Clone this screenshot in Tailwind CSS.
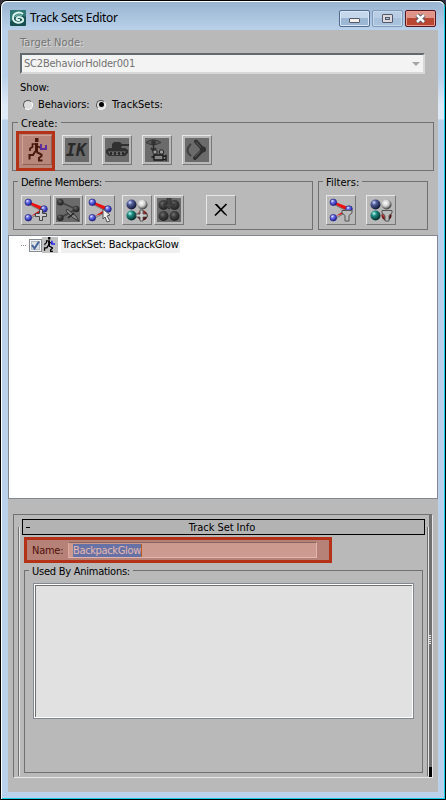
<!DOCTYPE html>
<html lang="en">
<head>
<meta charset="utf-8">
<title>Track Sets Editor</title>
<script src="https://cdn.jsdelivr.net/npm/@tailwindcss/browser@4"></script>
</head>
<body class="w-[446px] h-[800px] overflow-hidden bg-[#353039]">
<svg class="absolute w-0 h-0">
  <defs>
    <radialGradient id="blue" cx=".35" cy=".3" r=".7"><stop offset="0" stop-color="#f0f4ff"/><stop offset=".35" stop-color="#7378ee"/><stop offset="1" stop-color="#1c1c98"/></radialGradient>
    <radialGradient id="navy" cx=".35" cy=".3" r=".7"><stop offset="0" stop-color="#d5dcff"/><stop offset=".35" stop-color="#535f9c"/><stop offset="1" stop-color="#111633"/></radialGradient>
    <radialGradient id="teal" cx=".35" cy=".3" r=".7"><stop offset="0" stop-color="#b8fff2"/><stop offset=".35" stop-color="#208d83"/><stop offset="1" stop-color="#032b2a"/></radialGradient>
    <radialGradient id="pearl" cx=".4" cy=".35" r=".65"><stop offset="0" stop-color="#fff"/><stop offset=".5" stop-color="#d0d0d0"/><stop offset="1" stop-color="#383838"/></radialGradient>
    <radialGradient id="ruby" cx=".4" cy=".35" r=".65"><stop offset="0" stop-color="#e5a8a8"/><stop offset=".5" stop-color="#a02b2b"/><stop offset="1" stop-color="#300"/></radialGradient>
    <radialGradient id="coal" cx=".4" cy=".35" r=".65"><stop offset="0" stop-color="#707070"/><stop offset=".4" stop-color="#414141"/><stop offset="1" stop-color="#202020"/></radialGradient>
    <symbol id="nodes" viewBox="0 0 28 28">
      <path d="M7 5.500L21 11L18 14L7 8Z" fill="#ee1010"/><path d="M9 20L19 13.500L19 17Z" fill="#d31212"/>
      <path d="M8 9L18 14M9 22L20 16" stroke="#777" stroke-width="1" fill="none"/>
      <g fill="url(#blue)" stroke="#242480" stroke-width=".7"><circle cx="6.300" cy="6.300" r="3.300"/><circle cx="22" cy="13" r="3.300"/><circle cx="6.300" cy="21.700" r="3.300"/></g>
    </symbol>
    <symbol id="balls" viewBox="0 0 28 28">
      <circle cx="8.500" cy="8.500" r="5" fill="url(#navy)"/><circle cx="19.500" cy="8.500" r="5" fill="url(#pearl)"/><circle cx="8.500" cy="19.500" r="5" fill="url(#teal)"/><circle cx="19.500" cy="19.500" r="5" fill="url(#ruby)"/>
    </symbol>
    <symbol id="runner" viewBox="0 0 28 28">
      <rect x="12" y="2" width="3.500" height="4" fill="currentColor"/>
      <path d="M13.500 7V16" fill="none" stroke="currentColor" stroke-width="3"/>
      <path d="M12 8H9.500V11L7 12.500V15M14 10L18 12" fill="none" stroke="currentColor" stroke-width="1.700"/>
      <path d="M12.500 15L10 19H6.500V23.500M13.500 16L18.500 18.500V20L16 22V24.500H19.500" fill="none" stroke="currentColor" stroke-width="2"/>
    </symbol>
  </defs>
</svg>

<div class="relative flex h-[800px] w-[446px] flex-col rounded-t-[7px] border border-black bg-[#b9d1ea] bg-[linear-gradient(to_bottom,#b9d1ea_75px,#dfeaf7_105px,#dfeaf7_118px,#b9d1ea_119px)] px-[1px] font-['DejaVu_Sans_Condensed','DejaVu_Sans',sans-serif] text-[11px] leading-[13px] tracking-[-0.25px] text-black shadow-[inset_1px_1px_0_#fff,inset_-1px_-1px_0_#12cde9] [font-stretch:condensed]">
  <header class="flex h-[29px] shrink-0 items-start rounded-t-[6px] border-t border-white bg-linear-to-b from-[#99b4d1] to-[#b9d1ea] pl-[8px] pr-[8px]">
    <svg class="mt-[8px] h-4 w-4" viewBox="0 0 16 16"><rect width="16" height="16" rx="1" fill="#174f50"/><path d="M0 0H16V7Q8 3 0 12Z" fill="#2f7774"/><path d="M13 4C9 1 3 3 3 8c0 5 7 6 10 3c1-2-1-4-4-4c-3 0-3 3-1 3h2" fill="none" stroke="#d8f4ed" stroke-width="1.900"/><path d="M12 6C9 4 6 5 5 7" fill="none" stroke="#91c4bb"/></svg>
    <h1 class="ml-[4px] mt-[8px] font-['Noto_Sans',sans-serif] text-[12px] leading-[16px] tracking-[-0.32px]">Track Sets Editor</h1>
    <div class="ml-auto mt-[8px] flex gap-[2px]">
      <div class="flex h-[17px] w-[31px] items-center justify-center rounded-[2px] border border-[#536a8e] bg-linear-to-b from-[#c4d7eb] from-50% to-[#9cb7d4] to-50% shadow-[inset_0_0_0_1px_#d7e7f7]"><i class="mt-[4px] h-[5px] w-[11px] rounded-[1px] border border-[#53576a] bg-[#f5f2ed]"></i></div>
      <div class="flex h-[17px] w-[31px] items-center justify-center rounded-[2px] border border-[#8399b9] bg-linear-to-b from-[#b9cee5] from-50% to-[#a8c1dc] to-50% shadow-[inset_0_0_0_1px_#c7dbef]"><i class="flex h-[9px] w-[11px] items-center justify-center rounded-[1px] border border-[#53576a] bg-[#ddd9dc]"><b class="h-[3px] w-[5px] border border-[#53576a] bg-[#a9bfd8]"></b></i></div>
      <div class="flex h-[17px] w-[31px] items-center justify-center rounded-[2px] border border-[#541521] bg-linear-to-b from-[#df9489] from-50% to-[#b94631] to-50% shadow-[inset_0_0_0_1px_#ec9b8d]"><svg class="h-[11px] w-[13px]" viewBox="0 0 13 11"><path d="M3 2L10 9M10 2L3 9" stroke="#53576a" stroke-width="4.400"/><path d="M3 2L10 9M10 2L3 9" stroke="#fff" stroke-width="2.500"/></svg></div>
    </div>
  </header>

  <main class="mx-[6px] flex h-[762px] w-[430px] shrink-0 flex-col bg-[#b9b9b9]">
    <section class="flex h-[92px] shrink-0 flex-col pl-[12px]">
      <label class="mt-[6px] h-[17px] text-[#747474] [text-shadow:1px_1px_0_#d9d9d9] tracking-[0.08px]">Target Node:</label>
      <div class="flex h-[21px] w-[405px] items-center justify-between border-2 border-t-[#626a70] border-l-[#626a70] border-r-[#d8d8d8] border-b-[#d8d8d8] bg-[#f3f3f3] pl-[2px] pr-[3px] text-[#727272]"><span class="tracking-[-0.2px]">SC2BehaviorHolder001</span><i class="h-0 w-0 border-x-[4px] border-t-[4px] border-x-transparent border-t-[#a5a5a5]"></i></div>
      <div class="mt-[7px] h-[17px] tracking-[0px]">Show:</div>
      <div class="flex h-[13px] items-center tracking-[-0.1px]">
        <i class="ml-[3px] h-[10px] w-[10px] rounded-full border border-t-[#555] border-l-[#555] border-r-white border-b-white bg-[#ddd]"></i><span class="ml-[5px] w-[58px]">Behaviors:</span>
        <i class="flex h-[10px] w-[10px] items-center justify-center rounded-full border border-t-[#555] border-l-[#555] border-r-white border-b-white bg-[#ddd]"><b class="h-[5px] w-[5px] rounded-full bg-black"></b></i><span class="ml-[6px] tracking-[0.05px]">TrackSets:</span>
      </div>
    </section>

    <section class="relative ml-[4px] flex h-[49px] w-[422px] shrink-0 gap-[10px] border border-[#707070] pl-[9px] pt-[12px]">
      <h2 class="absolute left-[5px] top-[-6px] bg-[#b9b9b9] px-[3px] tracking-[0.05px]">Create:</h2>
      <div class="flex h-[30px] w-[30px] items-center justify-center border border-t-[#e7e7e7] border-l-[#e7e7e7] border-r-[#777] border-b-[#777]"><svg class="h-[28px] w-[28px] text-black" viewBox="0 0 28 28"><use href="#runner"/><path d="M18 8V13H23V9" fill="none" stroke="#2522ee" stroke-width="2"/></svg></div>
      <div class="flex h-[30px] w-[30px] items-center justify-center border border-t-[#e7e7e7] border-l-[#e7e7e7] border-r-[#777] border-b-[#777]"><span class="flex h-[24px] w-[24px] items-center justify-center overflow-hidden bg-[#6b6b6b] pr-[2px] font-['DejaVu_Sans_Mono','DejaVu_Sans',monospace] text-[17px] font-bold italic tracking-[0px] text-[#292929]">IK</span></div>
      <div class="flex h-[30px] w-[30px] items-center justify-center border border-t-[#e7e7e7] border-l-[#e7e7e7] border-r-[#777] border-b-[#777]"><svg class="h-[24px] w-[24px] bg-[#6b6b6b]" viewBox="0 0 24 24"><path d="M7 6L9 4H15L17 6H24V8H17L16 10H7ZM1 12L4 10H20L23 12V15L20 18H4L1 15Z" fill="#303030"/><path d="M3 13.500H21L18 17H5Z" fill="#777"/><g fill="#252525"><circle cx="6" cy="15.500" r="1.400"/><circle cx="10" cy="15.500" r="1.400"/><circle cx="14" cy="15.500" r="1.400"/><circle cx="18" cy="15.500" r="1.400"/></g></svg></div>
      <div class="flex h-[30px] w-[30px] items-center justify-center border border-t-[#e7e7e7] border-l-[#e7e7e7] border-r-[#777] border-b-[#777]"><svg class="h-[24px] w-[24px] bg-[#6b6b6b]" viewBox="0 0 24 24"><path d="M1 4.500Q8-1 16 4.500Q8 9 1 4.500Z" fill="#5a5a5a" stroke="#363636"/><circle cx="8.500" cy="4.500" r="2.400" fill="#333"/><path d="M8.500 6V12M6 10L8.500 13L11 10" fill="none" stroke="#292929" stroke-width="1.500"/><path d="M9 17H18V22H9ZM18 19L21 17.500V22L18 21M9 19H6.500" fill="#858585" stroke="#151515" stroke-width="1.300"/><g fill="#999" stroke="#222" stroke-width="1"><circle cx="10" cy="14" r="2.200"/><circle cx="16.500" cy="14" r="2.200"/></g></svg></div>
      <div class="flex h-[30px] w-[30px] items-center justify-center border border-t-[#e7e7e7] border-l-[#e7e7e7] border-r-[#777] border-b-[#777]"><svg class="h-[24px] w-[24px] bg-[#6b6b6b]" viewBox="0 0 24 24"><path d="M6 6Q-1 12 6 18" fill="none" stroke="#404040" stroke-width="2"/><path d="M11 3.500L18 11.500L10 20" fill="none" stroke="#303030" stroke-width="4" stroke-linecap="round"/><path d="M11 4L17 11L10 19" fill="none" stroke="#505050" stroke-width="1.200"/><circle cx="18" cy="11.500" r="3" fill="#303030"/></svg></div>
      <div class="absolute left-[3px] top-[8px] h-[40px] w-[39px] border-[3px] border-[#b43218] bg-[#b63b20]/40"></div>
    </section>

    <div class="ml-[5px] mt-[10px] flex h-[49px] shrink-0 gap-[5px]">
      <section class="relative flex w-[300px] border border-[#707070] pl-[7px] pt-[13px]">
        <h2 class="absolute left-[4px] top-[-6px] bg-[#b9b9b9] px-[3px]">Define Members:</h2>
        <div class="mr-[2px] h-[30px] w-[30px] border border-t-[#e7e7e7] border-l-[#e7e7e7] border-r-[#777] border-b-[#777]"><svg class="h-[28px] w-[28px]" viewBox="0 0 28 28"><use href="#nodes"/><path d="M17.500 13.500H20.500V17.500H24.500V20.500H20.500V24.500H17.500V20.500H13.500V17.500H17.500Z" fill="#ccc" stroke="#444" stroke-width="1"/></svg></div>
        <div class="mr-[2px] h-[30px] w-[30px] border border-t-[#e7e7e7] border-l-[#e7e7e7] border-r-[#777] border-b-[#777] p-[2px]"><svg class="h-[24px] w-[24px] bg-[#6b6b6b]" viewBox="2 2 24 24"><path d="M6 6L22 13L6 22" stroke="#424242" stroke-width="1.800" fill="none"/><g fill="url(#coal)"><circle cx="6.300" cy="6.300" r="3.300"/><circle cx="22" cy="13" r="3.300"/><circle cx="6.300" cy="21.700" r="3.300"/></g><path d="M13 13L22 20L25 25L19 22L12 15Z" fill="#858585" stroke="#292929" stroke-width=".8"/><path d="M14 22L20 17" stroke="#222" stroke-width="1.500"/></svg></div>
        <div class="mr-[7px] h-[30px] w-[30px] border border-t-[#e7e7e7] border-l-[#e7e7e7] border-r-[#777] border-b-[#777]"><svg class="h-[28px] w-[28px]" viewBox="0 0 28 28"><use href="#nodes"/><path d="M17 13L24 19L21 20L24 25L21 26L19 21L17 23Z" fill="#eee" stroke="#555" stroke-width="1"/></svg></div>
        <div class="mr-[2px] h-[30px] w-[30px] border border-t-[#e7e7e7] border-l-[#e7e7e7] border-r-[#777] border-b-[#777]"><svg class="h-[28px] w-[28px]" viewBox="0 0 28 28"><use href="#balls"/><path d="M17 14H20V18H24V21H20V25H17V21H13V18H17Z" fill="#ccc" stroke="#444" stroke-width=".8"/></svg></div>
        <div class="mr-[22px] h-[30px] w-[30px] border border-t-[#e7e7e7] border-l-[#e7e7e7] border-r-[#777] border-b-[#777] p-[2px]"><svg class="h-[24px] w-[24px] bg-[#6b6b6b]" viewBox="2 2 24 24"><g fill="url(#coal)"><circle cx="8.500" cy="9" r="5"/><circle cx="19.500" cy="9" r="5"/><circle cx="8.500" cy="20" r="5"/><circle cx="19.500" cy="20" r="5"/></g><path d="M12 2H16V8H20L14 13L8 8H12Z" fill="#424242" stroke="#2c2c2c" stroke-width=".8"/></svg></div>
        <div class="h-[30px] w-[30px] border border-t-[#e7e7e7] border-l-[#e7e7e7] border-r-[#777] border-b-[#777]"><svg class="h-[28px] w-[28px]" viewBox="0 0 28 28"><path d="M7.500 8L10 8L20 19V20L17 18Z"/><path d="M19.500 8L8 19.500" stroke="#000" stroke-width="1.700"/></svg></div>
      </section>
      <section class="relative flex w-[110px] gap-[10px] border border-[#707070] pl-[7px] pt-[13px]">
        <h2 class="absolute left-[4px] top-[-6px] bg-[#b9b9b9] px-[3px] tracking-[0.05px]">Filters:</h2>
        <div class="h-[30px] w-[30px] border border-t-[#e7e7e7] border-l-[#e7e7e7] border-r-[#777] border-b-[#777]"><svg class="h-[28px] w-[28px]" viewBox="0 0 28 28"><use href="#nodes"/><path d="M15 14.500H25V17L22 19.500V25H18V19.500L15 17Z" fill="#bbb" stroke="#555" stroke-width="1"/></svg></div>
        <div class="h-[30px] w-[30px] border border-t-[#e7e7e7] border-l-[#e7e7e7] border-r-[#777] border-b-[#777]"><svg class="h-[28px] w-[28px]" viewBox="0 0 28 28"><use href="#balls"/><path d="M15 14.500H25V17L22 19.500V25H18V19.500L15 17Z" fill="#bbb" stroke="#555" stroke-width="1"/></svg></div>
      </section>
    </div>

    <section class="mt-[5px] h-[264px] shrink-0 border border-[#828790] bg-white pl-[12px] pt-[1px]">
      <div class="flex h-[16px] items-center">
        <i class="w-[5px] border-t border-dotted border-[#888]"></i>
        <svg class="ml-[3px] h-[13px] w-[13px]" viewBox="0 0 13 13"><rect x=".5" y=".5" width="12" height="12" fill="#f4f4f4" stroke="#858b91"/><rect x="2.500" y="2.500" width="8" height="8" fill="#dce1e5" stroke="#b4bcc3"/><path d="M3 6L5.500 9.500L10 2.500" fill="none" stroke="#47649b" stroke-width="2"/></svg>
        <svg class="h-[16px] w-[16px] bg-[#c1c1c1] text-black" viewBox="3 2 24 25"><use href="#runner" width="28" height="28"/><path d="M18 8V13H23" fill="none" stroke="#2522ee" stroke-width="2.500"/></svg>
        <span class="ml-[3px] h-[16px] bg-[#f0f0f0] px-[1px] leading-[16px] tracking-[-0.18px]">TrackSet: BackpackGlow</span>
      </div>
    </section>

    <section class="ml-[5px] mt-[15px] flex h-[264px] w-[420px] shrink-0 border border-t-[#707070] border-l-[#707070] border-r-[#e7e7e7] border-b-[#e7e7e7]">
      <div class="relative mt-[12px] ml-[4px] h-[249px] w-[411px] border-l border-r border-[#707070] shadow-[inset_1px_0_0_#e7e7e7,1px_0_0_#e7e7e7]">
        <div class="-mt-[8px] ml-[3px] flex h-[16px] w-[403px] items-center border border-black bg-[#b3b3b3]"><i class="ml-[3px] w-[4px] border-t border-black"></i><h2 class="flex-1 pr-[10px] text-center tracking-[-0.05px]">Track Set Info</h2></div>
        <div class="ml-[5px] mt-[2px] flex h-[26px] w-[308px] items-center border-[3px] border-[#b43218] bg-[#b68277] pl-[5px]">
          <label class="w-[36px] text-[#50100c]">Name:</label>
          <div class="flex h-[16px] w-[249px] items-center border border-t-[#86645f] border-l-[#dfa69d] border-r-[#e2b5ae] border-b-[#e2b5ae] bg-[#cd9a90] pl-[4px]"><span class="h-[13px] border-r border-[#b95c20] bg-[#6672a5] leading-[14px] tracking-[-0.35px] text-[#e8b8b0]">BackpackGlow</span></div>
        </div>
        <div class="relative ml-[5px] mt-[7px] h-[203px] w-[399px] border border-[#707070] pl-[8px] pt-[12px]">
          <h3 class="absolute left-[4px] top-[-6px] bg-[#b9b9b9] px-[3px]">Used By Animations:</h3>
          <div class="h-[136px] w-[381px] border border-[#828790] bg-white p-[1px]"><div class="h-full w-full border-l border-t border-[#707070] bg-[#e1e1e1]"></div></div>
        </div>
      </div>
      <div class="relative ml-[1px] h-[262px] w-[3px] shrink-0 border-b-[10px] border-black bg-[#707070]"><i class="absolute left-0 top-[120px] h-[10px] w-[2px] bg-[repeating-linear-gradient(to_bottom,#e7e7e7_0px,#e7e7e7_1px,#707070_1px,#707070_2px)]"></i></div>
    </section>
  </main>
</div>
</body>
</html>
